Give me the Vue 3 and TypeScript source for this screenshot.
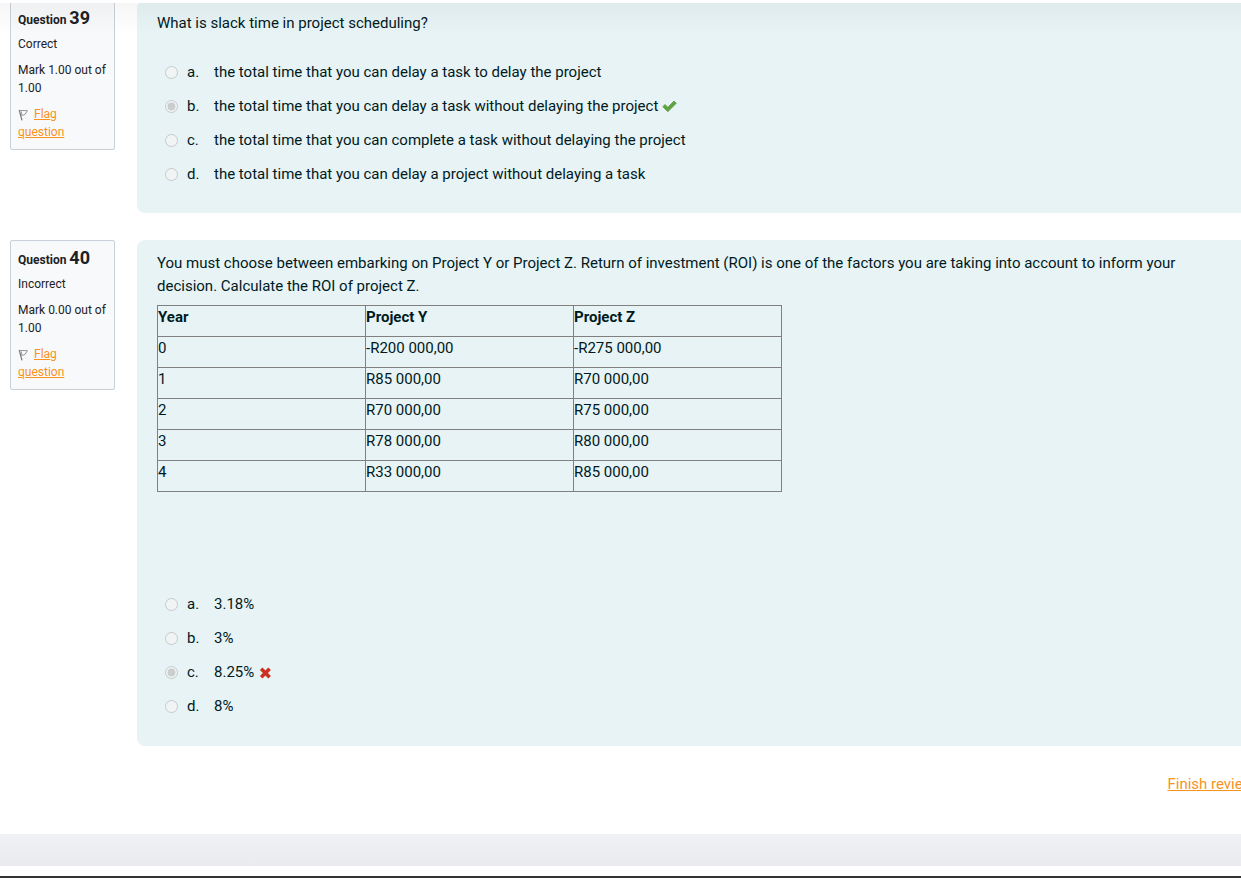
<script setup lang="ts">
interface Answer {
  letter: string
  text: string
}
interface Question {
  number: number
  state: string
  mark: string
  prompt: string
  table?: { head: string[]; rows: string[][] }
  answers: Answer[]
  chosen: string
  correct: boolean
}

const questions: Question[] = [
  {
    number: 39,
    state: 'Correct',
    mark: 'Mark 1.00 out of 1.00',
    prompt: 'What is slack time in project scheduling?',
    answers: [
      { letter: 'a', text: 'the total time that you can delay a task to delay the project' },
      { letter: 'b', text: 'the total time that you can delay a task without delaying the project' },
      { letter: 'c', text: 'the total time that you can complete a task without delaying the project' },
      { letter: 'd', text: 'the total time that you can delay a project without delaying a task' },
    ],
    chosen: 'b',
    correct: true,
  },
  {
    number: 40,
    state: 'Incorrect',
    mark: 'Mark 0.00 out of 1.00',
    prompt:
      'You must choose between embarking on Project Y or Project Z. Return of investment (ROI) is one of the factors you are taking into account to inform your decision. Calculate the ROI of project Z.',
    table: {
      head: ['Year', 'Project Y', 'Project Z'],
      rows: [
        ['0', '-R200 000,00', '-R275 000,00'],
        ['1', 'R85 000,00', 'R70 000,00'],
        ['2', 'R70 000,00', 'R75 000,00'],
        ['3', 'R78 000,00', 'R80 000,00'],
        ['4', 'R33 000,00', 'R85 000,00'],
      ],
    },
    answers: [
      { letter: 'a', text: '3.18%' },
      { letter: 'b', text: '3%' },
      { letter: 'c', text: '8.25%' },
      { letter: 'd', text: '8%' },
    ],
    chosen: 'c',
    correct: false,
  },
]
</script>

<template>
  <div class="page">
    <div class="top-shade"></div>
    <main>
      <section v-for="q in questions" :key="q.number" class="question">
        <aside class="info">
          <h3>Question <span class="number">{{ q.number }}</span></h3>
          <div class="state">{{ q.state }}</div>
          <div class="line">{{ q.mark }}</div>
          <div class="line flag-line">
            <svg class="flag" viewBox="0 0 12 12" aria-hidden="true">
              <path d="M1.2 1.2 L4 11.4" fill="none" stroke="#777" stroke-width="1.2" />
              <path d="M1.3 1.4 L9.4 1.7 L7.2 5.2 L4.4 6.4 M3.2 2.4 L4 7" fill="none" stroke="#8a8a8a" stroke-width="0.9" />
            </svg>
            <a href="#">Flag question</a>
          </div>
        </aside>
        <div class="content" :class="{ tabular: q.table }">
          <p class="prompt">{{ q.prompt }}</p>
          <table v-if="q.table">
            <thead>
              <tr>
                <th v-for="h in q.table.head" :key="h" scope="col">{{ h }}</th>
              </tr>
            </thead>
            <tbody>
              <tr v-for="row in q.table.rows" :key="row[0]">
                <td v-for="(cell, i) in row" :key="i">{{ cell }}</td>
              </tr>
            </tbody>
          </table>
          <div class="answers">
            <div v-for="a in q.answers" :key="a.letter" class="answer">
              <input
                :id="`q${q.number}${a.letter}`"
                type="radio"
                :name="`q${q.number}`"
                :checked="a.letter === q.chosen"
                disabled
              />
              <label :for="`q${q.number}${a.letter}`">
                <span class="letter">{{ a.letter }}.</span>
                <span>{{ a.text }}</span>
              </label>
              <template v-if="a.letter === q.chosen">
                <svg v-if="q.correct" class="mark" viewBox="0 0 15 13" role="img" aria-label="Correct">
                  <path d="M0.8 6.7 L3 4.5 L5.8 7.2 L12 1 L14.3 3.3 L5.8 11.8 Z" fill="#5fa143" stroke="#5fa143" stroke-width="0.8" stroke-linejoin="round" />
                </svg>
                <svg v-else class="mark" viewBox="0 0 15 13" role="img" aria-label="Incorrect">
                  <path d="M3.2 2.8 L11.6 11.2 M11.6 2.8 L3.2 11.2" fill="none" stroke="#ca3120" stroke-width="3.6" />
                </svg>
              </template>
            </div>
          </div>
        </div>
      </section>
      <nav class="finish"><a href="#">Finish review</a></nav>
    </main>
    <footer></footer>
  </div>
</template>

<style>
body {
  margin: 0;
  background: #fff;
}
</style>

<style scoped>
.page {
  position: relative;
  overflow: hidden;
  font-family: Roboto, "Liberation Sans", sans-serif;
  font-size: 15px;
  line-height: 23px;
  color: #001a1e;
}
.top-shade {
  position: absolute;
  inset: 0 0 auto;
  height: 32px;
  border-top: 3px solid #fff;
  background: linear-gradient(rgba(0, 0, 0, 0.035), rgba(0, 0, 0, 0)) padding-box;
  pointer-events: none;
}
.question {
  display: flex;
  align-items: flex-start;
  gap: 22px;
  padding-left: 10px;
  margin-bottom: 27px;
}
.info {
  box-sizing: border-box;
  flex: none;
  width: 105px;
  padding: 7px 7px 8px;
  border: 1px solid #cad0d7;
  border-radius: 2px;
  background: #f8f9fa;
  font-size: 12px;
  line-height: 18px;
  color: #1d2125;
}
.info h3 {
  margin: 0;
  font-size: 12px;
  line-height: 19px;
  font-weight: 700;
}
.number {
  font-size: 18px;
}
.state {
  margin-top: 5px;
}
.line {
  margin-top: 8px;
}
.flag-line {
  padding-right: 10px;
}
.flag {
  width: 12px;
  height: 12px;
  margin-right: 1px;
  vertical-align: -3px;
}
a {
  color: #f7931e;
  text-decoration: underline;
}
.content {
  flex: 1;
  min-width: 0;
  padding: 12px 20px 22px;
  border-radius: 8px 0 0 8px;
  background: #e7f3f5;
}
.tabular {
  padding-bottom: 23px;
}
.prompt {
  max-width: 1050px;
  margin: 0;
}
table {
  width: 625px;
  margin-top: 7px;
  border-collapse: collapse;
  table-layout: fixed;
}
th,
td {
  height: 23px;
  padding: 0 0 7px;
  border: 1px solid #808080;
  text-align: left;
  vertical-align: top;
}
.answers {
  margin-top: 20px;
  padding-left: 8px;
}
.tabular .answers {
  margin-top: 95px;
}
.answer {
  display: flex;
  align-items: center;
  height: 34px;
}
input {
  flex: none;
  width: 13px;
  height: 13px;
  margin: 0 9px 0 0;
}
label {
  display: flex;
}
.letter {
  width: 27px;
}
.mark {
  width: 15px;
  height: 13px;
  margin-left: 4px;
}
.finish {
  display: flex;
  justify-content: flex-end;
  margin-right: -13px;
  padding-bottom: 38px;
}
.flag {
  margin-right: 4px;
}
footer {
  height: 32px;
  background: linear-gradient(#f0f1f5, #eaebef);
  border-bottom: 10px solid #fff;
  background-clip: padding-box;
  box-shadow: 0 2px #333;
  margin-bottom: 2px;
}
</style>
